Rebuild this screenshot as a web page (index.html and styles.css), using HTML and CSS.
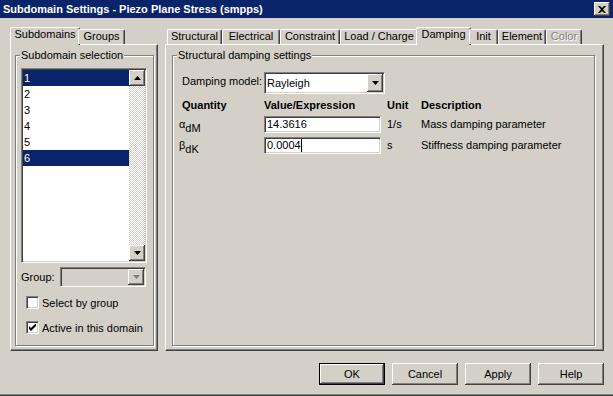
FILE: index.html
```html
<!DOCTYPE html>
<html>
<head>
<meta charset="utf-8">
<title>Subdomain Settings</title>
<link rel="stylesheet" href="styles.css">
</head>
<body>
<div class="window">
  <div class="titlebar">
    <span class="title">Subdomain Settings - Piezo Plane Stress (smpps)</span>
    <div class="close">
      <svg width="8" height="7" viewBox="0 0 8 7"><path d="M0 0h2l2 2 2-2h2L5 3.5 8 7H6L4 5 2 7H0l3-3.5z" fill="#000"/></svg>
    </div>
  </div>

  <div class="main">
    <div class="tabctl left">
      <div class="tabs">
        <div class="tab active w-subdomains">Subdomains</div>
        <div class="tab w-groups">Groups</div>
      </div>
      <div class="panel">
        <fieldset class="group group-left">
          <legend>Subdomain selection</legend>
          <div class="listbox">
            <ul class="items">
              <li class="sel">1</li>
              <li>2</li>
              <li>3</li>
              <li>4</li>
              <li>5</li>
              <li class="sel">6</li>
            </ul>
            <div class="vscroll">
              <div class="sbtn"><svg width="7" height="4" viewBox="0 0 7 4"><path d="M3.5 0L7 4H0z" fill="#000"/></svg></div>
              <div class="track"></div>
              <div class="sbtn"><svg width="7" height="4" viewBox="0 0 7 4"><path d="M0 0h7L3.5 4z" fill="#000"/></svg></div>
            </div>
          </div>
          <div class="grouprow">
            <span class="grouplabel">Group:</span>
            <div class="combo combo-disabled">
              <div class="combo-text"></div>
              <div class="combo-btn"><svg width="7" height="4" viewBox="0 0 7 4"><path d="M0 0h7L3.5 4z" fill="#808080"/></svg></div>
            </div>
          </div>
          <label class="check"><span class="box"></span>Select by group</label>
          <label class="check"><span class="box"><svg width="7" height="7" viewBox="0 0 7 7"><path d="M0 2v3l2 2 5-5V-1L2 4z" fill="#000"/></svg></span>Active in this domain</label>
        </fieldset>
      </div>
    </div>

    <div class="tabctl right">
      <div class="tabs">
        <div class="tab w-structural">Structural</div>
        <div class="tab w-electrical">Electrical</div>
        <div class="tab w-constraint">Constraint</div>
        <div class="tab w-load">Load / Charge</div>
        <div class="tab active w-damping">Damping</div>
        <div class="tab w-init">Init</div>
        <div class="tab w-element">Element</div>
        <div class="tab disabled w-color">Color</div>
      </div>
      <div class="panel">
        <fieldset class="group group-right">
          <legend>Structural damping settings</legend>
          <div class="form">
            <span class="flabel">Damping model:</span>
            <div class="combo combo-model">
              <div class="combo-text">Rayleigh</div>
              <div class="combo-btn"><svg width="7" height="4" viewBox="0 0 7 4"><path d="M0 0h7L3.5 4z" fill="#000"/></svg></div>
            </div>

            <span class="hdr">Quantity</span>
            <span class="hdr">Value/Expression</span>
            <span class="hdr">Unit</span>
            <span class="hdr">Description</span>

            <span class="sym">α<sub>dM</sub></span>
            <div class="input">14.3616</div>
            <span class="cell">1/s</span>
            <span class="cell">Mass damping parameter</span>

            <span class="sym">β<sub>dK</sub></span>
            <div class="input">0.0004<span class="caret"></span></div>
            <span class="cell">s</span>
            <span class="cell">Stiffness damping parameter</span>
          </div>
        </fieldset>
      </div>
    </div>
  </div>

  <div class="buttons">
    <div class="btn default">OK</div>
    <div class="btn">Cancel</div>
    <div class="btn">Apply</div>
    <div class="btn">Help</div>
  </div>
</div>
</body>
</html>
```
FILE: styles.css
```css
* { box-sizing: border-box; }
html, body { margin: 0; padding: 0; }
body {
  width: 613px;
  height: 396px;
  overflow: hidden;
  background: #D4D0C8;
  font-family: "Liberation Sans", Arial, sans-serif;
  font-size: 11px;
  color: #000;
}

.window {
  width: 613px;
  height: 396px;
  background: #D4D0C8;
  display: flex;
  flex-direction: column;
  box-shadow: inset 0 -1px #404040, inset 0 -2px #808080;
}

/* title bar */
.titlebar {
  flex: none;
  height: 18px;
  background: #0A246A;
  color: #fff;
  display: flex;
  align-items: center;
  justify-content: space-between;
  padding: 0 3px 0 3px;
}
.title { font-weight: bold; font-size: 11px; line-height: 13px; white-space: nowrap; }
.close {
  width: 16px;
  height: 14px;
  background: #D4D0C8;
  box-shadow: inset -1px -1px #404040, inset 1px 1px #fff, inset -2px -2px #808080;
  display: flex;
  align-items: center;
  justify-content: center;
}
.close svg { display: block; margin-left: -1px; }

/* main row */
.main {
  flex: none;
  display: flex;
  gap: 7px;
  padding: 9px 9px 0 10px;
}
.tabctl { display: flex; flex-direction: column; }
.tabctl.left { width: 148px; }
.tabctl.right { width: 439px; }

.tabs {
  display: flex;
  align-items: flex-end;
  height: 17px;
  padding-left: 2px;
  position: relative;
  z-index: 1;
}
.tab {
  flex: none;
  height: 15px;
  border-top: 1px solid #fff;
  border-left: 1px solid #fff;
  border-right: 1px solid #404040;
  box-shadow: inset -1px 0 #808080;
  border-radius: 2px 2px 0 0;
  background: #D4D0C8;
  text-align: center;
  line-height: 13px;
  white-space: nowrap;
}
.tab.active {
  height: 18px;
  margin: 0 -2px -1px;
  line-height: 12px;
}
.tab.disabled { color: #808080; text-shadow: 1px 1px #fff; }

.w-subdomains { width: 66px; }
.w-groups { width: 47px; }
.w-structural { width: 55px; }
.w-electrical { width: 58px; }
.w-constraint { width: 60px; }
.w-load { width: 78px; }
.w-damping { width: 51px; }
.w-init { width: 29px; }
.w-element { width: 48px; }
.w-color { width: 36px; }
.tab.active.w-subdomains { width: 70px; }
.tab.active.w-damping { width: 55px; }

.panel {
  height: 307px;
  border-top: 1px solid #fff;
  border-left: 1px solid #fff;
  border-right: 1px solid #404040;
  border-bottom: 1px solid #404040;
  box-shadow: inset -1px -1px #808080;
  padding-top: 4px;
}

/* group boxes */
.group {
  margin: 0;
  padding: 0;
  height: 297px;
  border: 1px solid #808080;
  box-shadow: inset 1px 1px #fff, 1px 1px #fff;
  min-width: 0;
}
.group legend {
  margin-left: 4px;
  padding: 0 1px;
  line-height: 13px;
  background: #D4D0C8;
}
.group-left { margin-left: 4px; width: 139px; }
.group-right { margin-left: 6px; width: 423px; }

/* list box */
.listbox {
  margin: 6px 0 0 5px;
  width: 126px;
  height: 195px;
  border: 1px solid;
  border-color: #808080 #fff #fff #808080;
  box-shadow: inset 1px 1px #404040, inset -1px -1px #D4D0C8;
  padding: 1px;
  display: flex;
}
.items {
  list-style: none;
  margin: 0;
  padding: 0;
  flex: 1;
  background: #fff;
}
.items li {
  height: 16px;
  line-height: 16px;
  padding-left: 1px;
}
.items li.sel { background: #0A246A; color: #fff; }

.vscroll {
  width: 16px;
  display: flex;
  flex-direction: column;
}
.sbtn {
  flex: none;
  width: 16px;
  height: 16px;
  background: #D4D0C8;
  box-shadow: inset -1px -1px #404040, inset 1px 1px #fff, inset -2px -2px #808080;
  display: flex;
  align-items: center;
  justify-content: center;
}
.sbtn svg { display: block; }
.track {
  flex: 1;
  background: conic-gradient(#fff 25%, #D4D0C8 0 50%, #fff 0 75%, #D4D0C8 0) 0 0 / 2px 2px;
}

/* combo boxes */
.grouprow {
  display: flex;
  align-items: center;
  margin: 4px 0 0 5px;
}
.grouplabel { width: 39px; }
.combo {
  display: flex;
  border: 1px solid;
  border-color: #808080 #fff #fff #808080;
  box-shadow: inset 1px 1px #404040, inset -1px -1px #D4D0C8;
  padding: 1px;
  background: #fff;
}
.combo-disabled { width: 86px; height: 20px; background: #D4D0C8; }
.combo-text { flex: 1; padding-left: 1px; line-height: 18px; }
.combo-btn {
  width: 16px;
  background: #D4D0C8;
  box-shadow: inset -1px -1px #404040, inset 1px 1px #fff, inset -2px -2px #808080;
  display: flex;
  align-items: center;
  justify-content: center;
}
.combo-btn svg { display: block; }
.combo-model { width: 121px; height: 22px; }

/* checkboxes */
.check {
  display: flex;
  align-items: center;
  gap: 3px;
  height: 25px;
  margin-left: 10px;
}
.grouprow + .check { margin-top: 3px; }
.box {
  width: 13px;
  height: 13px;
  background: #fff;
  border: 1px solid;
  border-color: #808080 #fff #fff #808080;
  box-shadow: inset 1px 1px #404040, inset -1px -1px #D4D0C8;
  display: flex;
  align-items: center;
  justify-content: center;
}
.box svg { display: block; }

/* right form */
.form {
  display: grid;
  grid-template-columns: 82px 123px 34px 1fr;
  grid-template-rows: 26px 18px 21px 21px;
  align-items: start;
  padding-left: 9px;
  margin-top: 10px;
}
.flabel { line-height: 16px; margin-top: 1px; }
.combo-model { grid-column: 2 / span 3; }
.hdr { font-weight: bold; line-height: 14px; }
.sym { line-height: 17px; margin-left: -3px; white-space: nowrap; }
.sym sub { font-size: 11px; vertical-align: -4px; line-height: 0; }
.cell { line-height: 17px; }
.input {
  width: 117px;
  height: 17px;
  background: #fff;
  border: 1px solid;
  border-color: #808080 #fff #fff #808080;
  box-shadow: inset 1px 1px #404040, inset -1px -1px #D4D0C8;
  padding: 0 2px;
  line-height: 15px;
  display: flex;
  align-items: center;
}
.caret {
  display: inline-block;
  width: 1px;
  height: 13px;
  background: #000;
}

/* bottom buttons */
.buttons {
  flex: none;
  display: flex;
  justify-content: flex-end;
  gap: 7px;
  padding: 12px 9px 0 0;
}
.btn {
  width: 66px;
  height: 22px;
  background: #D4D0C8;
  box-shadow: inset -1px -1px #404040, inset 1px 1px #fff, inset -2px -2px #808080;
  display: flex;
  align-items: center;
  justify-content: center;
}
.btn.default {
  border: 1px solid #000;
}
```
